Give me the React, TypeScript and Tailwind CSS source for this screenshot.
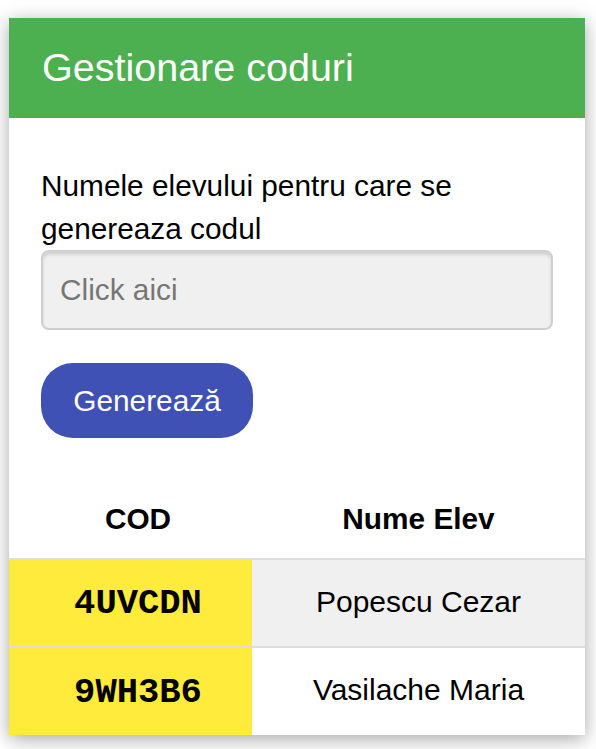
import React from "react";

export default function App() {
  const rows = [
    { code: "4UVCDN", name: "Popescu Cezar", bg: "bg-[#f0f0f0]" },
    { code: "9WH3B6", name: "Vasilache Maria", bg: "bg-white" },
  ];
  return (
    <div className="min-h-[749px] bg-white pt-[18px] pl-[9px]" style={{ fontFamily: '"Liberation Sans", Arial, sans-serif' }}>
      <div className="w-[576px] h-[717px] bg-white shadow-[0_4px_18px_rgba(0,0,0,0.35)] overflow-hidden">
        <div className="h-[100px] bg-[#4caf50] flex items-center pl-[33px]">
          <h1 className="text-[39.5px] text-white font-normal leading-none">Gestionare coduri</h1>
        </div>
        <div className="px-[32px] pt-[46px]">
          <label className="block text-[29.8px] leading-[43px] text-black">
            Numele elevului pentru care se genereaza codul
          </label>
          <input
            className="block w-[512px] h-[80px] rounded-[8px] border-2 border-[#cfcfcf] bg-[#f0f0f0] shadow-[inset_0_3px_3px_rgba(0,0,0,0.12)] px-[17px] text-[29.8px] text-black placeholder:text-[#767676] outline-none"
            placeholder="Click aici"
          />
          <button className="mt-[33px] h-[75px] w-[212px] rounded-[32px] bg-[#3f51b5] text-white text-[29.8px] leading-none">
            Generează
          </button>
        </div>
        <table className="mt-[33px] w-[576px] border-collapse">
          <thead>
            <tr className="h-[88px] border-b-2 border-[#dddddd]">
              <th className="w-[243px] pl-[15px] pt-[10px] text-[29.8px] font-bold text-black text-center">COD</th>
              <th className="pt-[10px] text-[29.8px] font-bold text-black text-center">Nume Elev</th>
            </tr>
          </thead>
          <tbody>
            {rows.map((r, i) => (
              <tr key={r.code} className={`h-[88px] ${i === 0 ? "border-b-2 border-[#dddddd]" : ""}`}>
                <td
                  className="w-[243px] pl-[15px] pt-[2px] bg-[#ffeb3b] text-center text-[35.5px] font-bold text-black"
                  style={{ fontFamily: '"Courier New", "Liberation Mono", monospace' }}
                >
                  {r.code}
                </td>
                <td className={`${r.bg} pb-[4px] text-center text-[30px] text-black`}>{r.name}</td>
              </tr>
            ))}
          </tbody>
        </table>
      </div>
    </div>
  );
}
